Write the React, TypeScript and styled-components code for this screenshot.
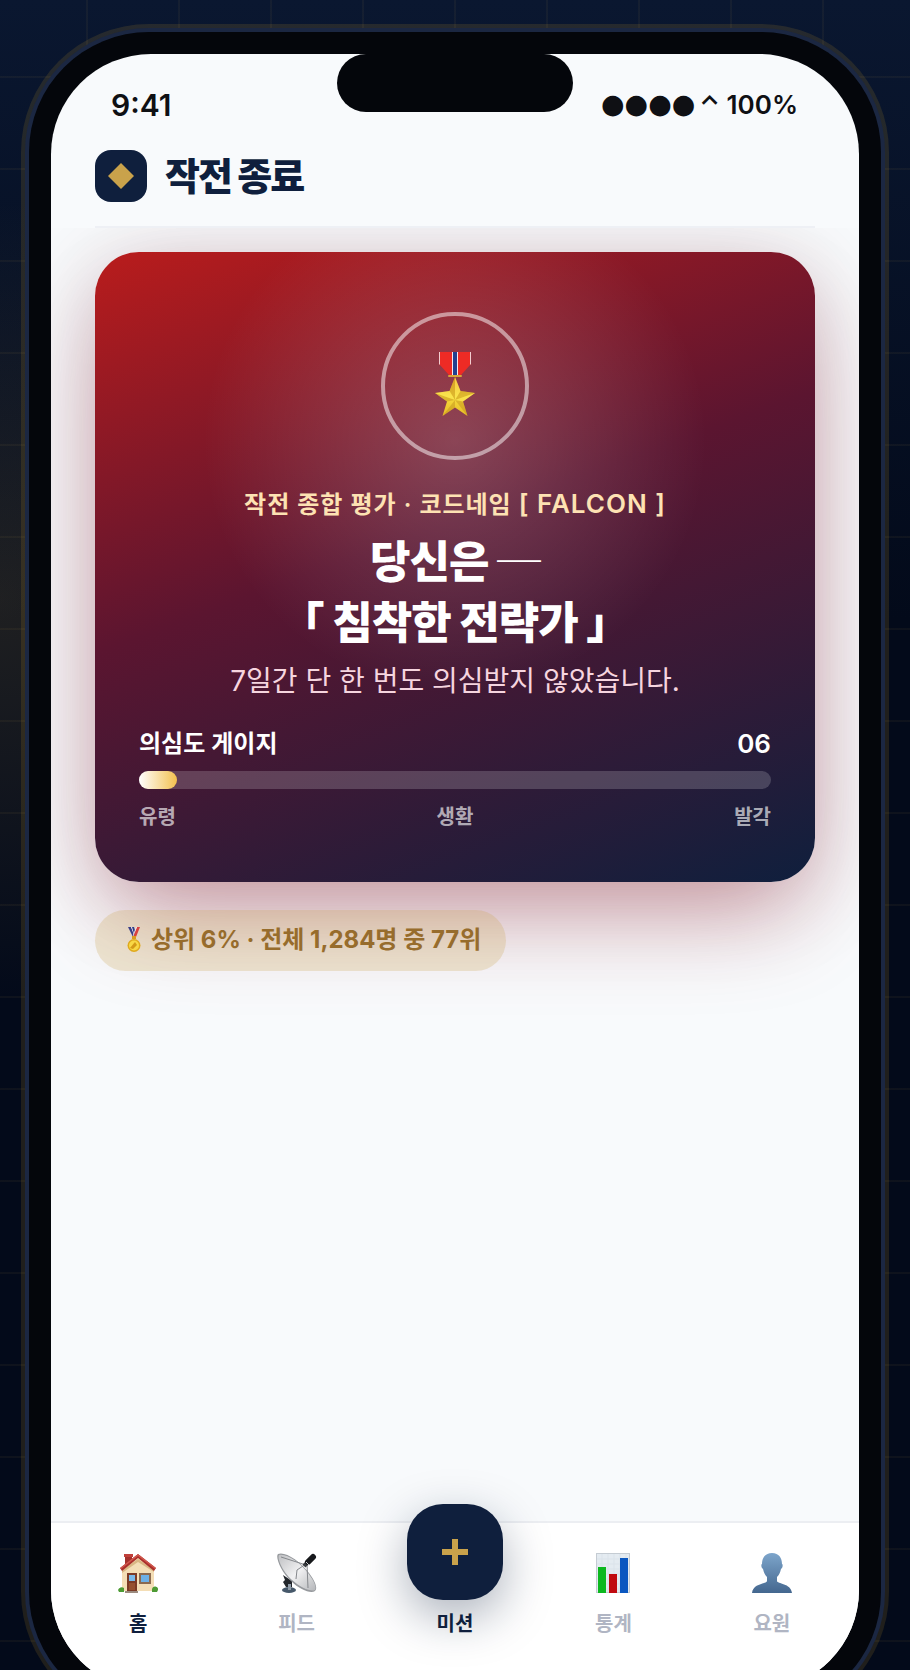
import React from 'react';
import styled, { createGlobalStyle } from 'styled-components';

const GlobalStyle = createGlobalStyle`
  *, *::before, *::after { box-sizing: border-box; }
  html, body { margin: 0; height: 100%; }
  body {
    overflow: hidden;
    background: #030a1a;
    font-family: Inter, 'Noto Sans CJK KR', sans-serif;
    color: #0f1f3d;
  }
  button { font: inherit; border: 0; padding: 0; background: none; cursor: pointer; }
`;

const Backdrop = styled.div`
  height: 100vh;
  overflow: hidden;
  padding: 32px 29px 0;
  background:
    repeating-linear-gradient(90deg, transparent 0 86px, rgba(201, 162, 75, 0.06) 86px 88px, transparent 88px 92px),
    repeating-linear-gradient(180deg, transparent 0 76px, rgba(201, 162, 75, 0.06) 76px 78px, transparent 78px 92px),
    radial-gradient(circle 400px at 0 600px, rgba(201, 162, 75, 0.14), transparent),
    linear-gradient(180deg, #0a1730 0, #030a1a 620px);
`;

const Phone = styled.div`
  height: calc(100vh + 10px);
  padding: 22px;
  border-radius: 120px;
  background: #04060b;
  box-shadow: 0 0 0 4px #1b2742, 0 0 0 8px rgba(212, 160, 40, 0.14);
`;

const Screen = styled.div`
  position: relative;
  display: flex;
  flex-direction: column;
  height: 100%;
  border-radius: 100px;
  overflow: hidden;
  background: #f8fafc;
`;

const Island = styled.div`
  position: absolute;
  top: 0;
  left: 50%;
  width: 236px;
  height: 58px;
  margin-left: -118px;
  border-radius: 30px;
  background: #04060b;
`;

const StatusBar = styled.div`
  display: flex;
  justify-content: space-between;
  align-items: center;
  padding: 33px 61px 0 60px;
  line-height: 36px;
  font-weight: 600;
  color: #0f1014;
`;

const Clock = styled.time`
  font-size: 30px;
`;

const Indicators = styled.span`
  display: flex;
  align-items: flex-start;
  gap: 4px;
  font-size: 26px;
`;

const Signal = styled.span`
  font-family: 'DejaVu Sans', sans-serif;
  font-size: 27px;
  line-height: 34px;
  font-weight: 400;
`;

const Header = styled.header`
  display: flex;
  align-items: center;
  gap: 18px;
  margin: 0 44px;
  padding: 27px 0 24px;
  border-bottom: 2px solid #eef0f5;
`;

const Logo = styled.span`
  display: grid;
  place-items: center;
  width: 52px;
  height: 52px;
  border-radius: 16px;
  background: #0f1f3d;
`;

const Title = styled.h1`
  margin: 0;
  font-size: 38px;
  line-height: 52px;
  font-weight: 800;
  letter-spacing: -2px;
`;

const Content = styled.main`
  flex: 1;
  display: flex;
  flex-direction: column;
  align-items: flex-start;
  gap: 28px;
  min-height: 0;
  padding: 24px 44px;
  overflow: hidden;
`;

const ResultCard = styled.section`
  align-self: stretch;
  display: flex;
  flex-direction: column;
  align-items: center;
  padding: 60px 44px 50px;
  border-radius: 44px;
  color: #fff;
  text-align: center;
  background:
    radial-gradient(circle 252px at 50% 30%, rgba(255, 255, 255, 0.2), transparent),
    linear-gradient(160deg, #b91c1c 0%, #5b1530 45%, #0f1f3d 100%);
  box-shadow: 0 48px 100px -20px rgba(150, 20, 35, 0.32), 0 12px 88px rgba(80, 10, 25, 0.22);
`;

const Seal = styled.div`
  display: grid;
  place-items: center;
  width: 148px;
  height: 148px;
  border: 4px solid rgba(255, 255, 255, 0.5);
  border-radius: 50%;
`;

const Overline = styled.p`
  margin: 24px 0 0;
  font-size: 24px;
  line-height: 40px;
  font-weight: 600;
  letter-spacing: 1px;
  color: #fde2b3;
`;

const CodeName = styled.span`
  font-size: 26px;
`;

const Verdict = styled.h2`
  margin: 7px 0 0;
  font-size: 44px;
  line-height: 61px;
  font-weight: 800;
  letter-spacing: -1px;
`;

const Summary = styled.p`
  margin: 6px 0 0;
  font-size: 28px;
  line-height: 42px;
  color: #f6d5df;
`;

const Gauge = styled.div`
  align-self: stretch;
  margin-top: 24px;
`;

const GaugeRow = styled.div<{ $muted?: boolean }>`
  display: flex;
  justify-content: space-between;
  font-size: ${p => (p.$muted ? 20 : 24)}px;
  line-height: ${p => (p.$muted ? 30 : 36)}px;
  font-weight: 600;
  color: ${p => (p.$muted ? 'rgba(255, 255, 255, 0.65)' : '#fff')};
`;

const Score = styled.span`
  font-size: 26px;
`;

const Track = styled.div`
  height: 18px;
  margin: 9px 0 13px;
  border-radius: 9px;
  background: rgba(255, 255, 255, 0.18);
`;

const Fill = styled.div`
  height: 100%;
  border-radius: 9px;
  background: linear-gradient(90deg, #fff, #f3c04e);
`;

const RankPill = styled.div`
  display: flex;
  align-items: center;
  gap: 10px;
  padding: 12px 25px 13px 32px;
  border-radius: 32px;
  font-size: 24px;
  line-height: 36px;
  font-weight: 700;
  color: #976c2c;
  background: rgba(201, 162, 75, 0.24);
`;

const TabBar = styled.nav`
  position: relative;
  display: grid;
  grid-template-columns: repeat(5, 1fr);
  padding: 23px 8px 51px;
  border-top: 2px solid #eceef2;
  background: #fff;
`;

const Tab = styled.button<{ $active?: boolean }>`
  display: flex;
  flex-direction: column;
  align-items: center;
  justify-content: flex-end;
  gap: 16px;
  font-size: 20px;
  line-height: 30px;
  font-weight: 600;
  color: ${p => (p.$active ? '#0f1f3d' : '#b0b5c3')};
`;

const Fab = styled.span`
  display: grid;
  place-items: center;
  width: 96px;
  height: 96px;
  margin-top: -42px;
  margin-bottom: -7px;
  border-radius: 36px;
  background: #0f1f3d;
  box-shadow: 0 16px 48px rgba(15, 31, 61, 0.35);
`;

const MilitaryMedal = () => (
  <svg width="40" height="68" viewBox="0 0 40 68" aria-hidden="true">
    <defs>
      <linearGradient id="starGold" x1="0" y1="0" x2="0" y2="1">
        <stop offset="0" stopColor="#f0b32c" />
        <stop offset="0.5" stopColor="#f7dc3e" />
        <stop offset="1" stopColor="#e6bc26" />
      </linearGradient>
    </defs>
    <path d="M4 0h32v12l-10 11H14L4 12z" fill="#ee2b25" />
    <path d="M4 0h1v13l-1-1zM35 0h1v12l-1 1z" fill="#f3cdd0" />
    <path d="M17 0h6v23h-6z" fill="#f5e9ee" />
    <path d="M18 0h4v23h-4z" fill="#23408f" />
    <rect x="13" y="23" width="14" height="2" rx="1" fill="#d9a53a" />
    <path d="M20 25l5.500 14L40 41 28 49.500 32.500 64 20 55.500 7.500 64 12 49.500 0 41l14.500-2z" fill="url(#starGold)" />
    <path d="M20 25v23l-5.500-9zM0 41l20 7-8 1.500zM7.500 64L20 48v7.500zM32.500 64L20 48l8 1.500zM40 41l-20 7 5.500-9z" fill="#b98518" opacity="0.4" />
    <path d="M20 25v23l5.500-9zM0 41l20 7-5.500-9zM40 41l-20 7 8 1.500z" fill="#fff06b" opacity="0.35" />
  </svg>
);

const RankMedal = () => (
  <svg width="14" height="26" viewBox="0 0 14 26" aria-hidden="true">
    <path d="M1 0h3l4 10H6z" fill="#3b3f87" />
    <path d="M4 0h1l4 10H8z" fill="#e8e6f4" />
    <path d="M5 0h2l2 7-1 3z" fill="#2f3f8a" />
    <path d="M13 0h-3L6 10h3z" fill="#d9413f" />
    <path d="M10 0H9L6 8v2z" fill="#f4e5e8" />
    <path d="M5 9h4v3H5z" fill="#d99c1f" />
    <circle cx="7" cy="18.500" r="6.500" fill="#dfa91d" />
    <circle cx="7" cy="18.500" r="5" fill="#f8d845" />
    <path d="M3 21l5-6 2 3-4 4z" fill="#d49a18" />
  </svg>
);

const HouseIcon = () => (
  <svg width="40" height="40" viewBox="0 0 40 40" aria-hidden="true">
    <path d="M7 2h7v12H7z" fill="#a3312c" />
    <path d="M6 1h9v3H6z" fill="#c0403a" />
    <path d="M4 16L20 4l16 12v22H4z" fill="#f4deb6" />
    <path d="M4 17L20 6l16 11v2L20 9 4 20z" fill="#d9b784" />
    <path d="M20 1l18 14-2 3L20 5 4 18l-2-3z" fill="#ab2f2b" />
    <path d="M20 1l18 14-1 1L20 3 3 16l-1-1z" fill="#d0574c" />
    <path d="M9 20h10v19H9z" fill="#7b3a26" />
    <path d="M11 22h6v6h-6z" fill="#79b8e8" />
    <path d="M11 30h6v7h-6z" fill="#96502f" />
    <path d="M21 20h12v11H21z" fill="#8b6a50" />
    <path d="M23 22h8v7h-8z" fill="#6db0e6" />
    <path d="M7 38h13v2H7z" fill="#9c8c80" />
    <path d="M0 37a4 4 0 0 1 6-2v4H1zM34 36a3 3 0 0 1 6 1l-1 2h-5z" fill="#4d9b34" />
  </svg>
);

const DishIcon = () => (
  <svg width="40" height="40" viewBox="0 0 40 40" aria-hidden="true">
    <defs>
      <linearGradient id="dish" x1="0" y1="0" x2="1" y2="1">
        <stop offset="0" stopColor="#bfc0c3" />
        <stop offset="0.5" stopColor="#f1f1f2" />
        <stop offset="1" stopColor="#b5b7ba" />
      </linearGradient>
    </defs>
    <path d="M6 22l9 6v6H9l-3-5 2-2z" fill="#22262b" />
    <ellipse cx="12" cy="37" rx="7" ry="3" fill="#46586a" />
    <path d="M11 31h3v6h-3z" fill="#8d99a5" />
    <path d="M1 1c7-3 22 7 31 19 6 8 9 15 6 18-4 3-15-1-24-10C4 19-2 4 1 1z" fill="#96999d" />
    <path d="M2 2c7-2 21 7 29 18 6 8 9 14 7 17-4 2-14-2-23-10C5 18 0 5 2 2z" fill="url(#dish)" />
    <path d="M4 4l25 8M20 17l9-6M19 26l1-9M31 35l-1-24" stroke="#85888c" fill="none" />
    <path d="M27 13l3-3" stroke="#3a3d41" strokeWidth="4" />
    <path d="M31 9l5-5" stroke="#17191c" strokeWidth="6" strokeLinecap="round" />
    <path d="M29 9l3 3" stroke="#c6c8ca" strokeWidth="1" />
  </svg>
);

const ChartIcon = () => (
  <svg width="40" height="40" viewBox="0 0 40 40" aria-hidden="true">
    <path d="M3 0h34v40H3z" fill="#c5ccd3" />
    <path d="M4 1h32v38H4z" fill="#e4ebf1" />
    <path d="M4 6h32M4 11h32M4 16h32M4 21h32M4 26h32M4 31h32M4 36h32M9 1v38M15 1v38M21 1v38M27 1v38M33 1v38" stroke="#dbe3ea" />
    <path d="M5 14h8v26H5z" fill="#0cb81f" />
    <path d="M16 21h8v19h-8z" fill="#c00a10" />
    <path d="M27 5h8v35h-8z" fill="#0b57c0" />
  </svg>
);

const PersonIcon = () => (
  <svg width="40" height="40" viewBox="0 0 40 40" aria-hidden="true">
    <defs>
      <linearGradient id="person" x1="0" y1="0" x2="0" y2="1">
        <stop offset="0" stopColor="#7da5cb" />
        <stop offset="1" stopColor="#44678f" />
      </linearGradient>
    </defs>
    <path d="M20 0c7 0 10 5 10 11 1 0 1 4-1 5-1 4-2 6-4 8v4c0 3 14 2 15 12H0c1-10 15-9 15-12v-4c-2-2-3-4-4-8-2-1-2-5-1-5C10 5 13 0 20 0z" fill="url(#person)" />
  </svg>
);

const tabs = [
  { label: '홈', icon: <HouseIcon />, active: true },
  { label: '피드', icon: <DishIcon /> },
  {
    label: '미션',
    active: true,
    icon: (
      <Fab>
        <svg width="26" height="26" viewBox="0 0 26 26" aria-hidden="true">
          <path d="M10 0h6v10h10v6H16v10h-6V16H0v-6h10z" fill="#c9a24b" />
        </svg>
      </Fab>
    ),
  },
  { label: '통계', icon: <ChartIcon /> },
  { label: '요원', icon: <PersonIcon /> },
];

const suspicion = 6;

export default function App() {
  return (
    <>
      <GlobalStyle />
      <Backdrop>
        <Phone>
          <Screen>
            <Island />
            <StatusBar>
              <Clock>9:41</Clock>
              <Indicators><Signal>●●●●</Signal><span>⌃ 100%</span></Indicators>
            </StatusBar>
            <Header>
              <Logo>
                <svg width="26" height="26" viewBox="0 0 26 26" aria-hidden="true">
                  <path d="M13 0l13 13-13 13L0 13z" fill="#c9a24b" />
                </svg>
              </Logo>
              <Title>작전 종료</Title>
            </Header>
            <Content>
              <ResultCard>
                <Seal><MilitaryMedal /></Seal>
                <Overline>작전 종합 평가 · 코드네임 <CodeName>[ FALCON ]</CodeName></Overline>
                <Verdict>당신은 ─<br />「 침착한 전략가 」</Verdict>
                <Summary>7일간 단 한 번도 의심받지 않았습니다.</Summary>
                <Gauge>
                  <GaugeRow><span>의심도 게이지</span><Score>06</Score></GaugeRow>
                  <Track role="meter" aria-label="의심도 게이지" aria-valuemin={0} aria-valuemax={100} aria-valuenow={suspicion}>
                    <Fill style={{ width: `${suspicion}%` }} />
                  </Track>
                  <GaugeRow $muted><span>유령</span><span>생환</span><span>발각</span></GaugeRow>
                </Gauge>
              </ResultCard>
              <RankPill><RankMedal />상위 6% · 전체 1,284명 중 77위</RankPill>
            </Content>
            <TabBar>
              {tabs.map(t => (
                <Tab key={t.label} type="button" $active={t.active}>{t.icon}{t.label}</Tab>
              ))}
            </TabBar>
          </Screen>
        </Phone>
      </Backdrop>
    </>
  );
}
